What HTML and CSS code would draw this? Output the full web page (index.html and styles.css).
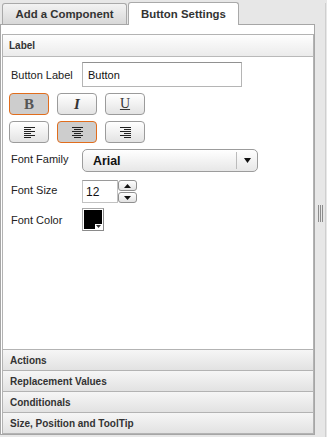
FILE: index.html
```html
<!DOCTYPE html>
<html>
<head>
<meta charset="utf-8">
<link rel="stylesheet" href="styles.css">
</head>
<body>
<div class="main">
  <div class="tabs">
    <div class="tab">Add a Component</div>
    <div class="tab active">Button Settings</div>
  </div>
  <div class="panel">
    <div class="sec-head first">Label</div>
    <div class="sec-body">
      <div class="field">
        <span class="field-label">Button Label</span>
        <input class="text-input" type="text" value="Button">
      </div>
      <div class="tool-row">
        <div class="tool on"><span class="g-b">B</span></div>
        <div class="tool"><span class="g-i">I</span></div>
        <div class="tool"><span class="g-u">U</span></div>
      </div>
      <div class="tool-row">
        <div class="tool">
          <svg width="11" height="11" viewBox="0 0 11 11"><g stroke="#222" stroke-width="1"><path d="M0 0.5H11M0 2.5H7M0 4.5H11M0 6.5H7M0 8.5H11M0 10.5H7"/></g></svg>
        </div>
        <div class="tool on">
          <svg width="11" height="11" viewBox="0 0 11 11"><g stroke="#222" stroke-width="1"><path d="M0 0.5H11M2 2.5H9M0 4.5H11M2 6.5H9M0 8.5H11M2 10.5H9"/></g></svg>
        </div>
        <div class="tool">
          <svg width="11" height="11" viewBox="0 0 11 11"><g stroke="#222" stroke-width="1"><path d="M0 0.5H11M4 2.5H11M0 4.5H11M4 6.5H11M0 8.5H11M4 10.5H11"/></g></svg>
        </div>
      </div>
      <div class="field f-family">
        <span class="field-label lbl-up">Font Family</span>
        <div class="select">
          <span class="select-text">Arial</span>
          <span class="select-arrow"><svg width="7" height="5" viewBox="0 0 7 5"><path d="M0 0H7L3.5 5Z" fill="#111"/></svg></span>
        </div>
      </div>
      <div class="field f-size">
        <span class="field-label lbl-up">Font Size</span>
        <input class="num-input" type="text" value="12">
        <div class="spin">
          <div class="spin-btn"><svg width="7" height="4" viewBox="0 0 7 4"><path d="M0 4H7L3.5 0Z" fill="#111"/></svg></div>
          <div class="spin-btn"><svg width="7" height="4" viewBox="0 0 7 4"><path d="M0 0H7L3.5 4Z" fill="#111"/></svg></div>
        </div>
      </div>
      <div class="field f-color">
        <span class="field-label">Font Color</span>
        <div class="swatch"><div class="swatch-fill"></div><div class="swatch-arrow"><svg width="5" height="3" viewBox="0 0 5 3"><path d="M0 0H5L2.5 3Z" fill="#333"/></svg></div></div>
      </div>
    </div>
    <div class="sec-head">Actions</div>
    <div class="sec-head">Replacement Values</div>
    <div class="sec-head">Conditionals</div>
    <div class="sec-head last">Size, Position and ToolTip</div>
  </div>
</div>
<div class="splitter">
  <div class="grip-col"><div class="grip"><i></i><i></i><i></i></div></div>
  <div class="edge"></div>
</div>
</body>
</html>
```
FILE: styles.css
```css
* { box-sizing: border-box; margin: 0; padding: 0; }
html, body { width: 327px; height: 437px; overflow: hidden; }
body {
  background: #e7e7e7;
  font-family: "Liberation Sans", Arial, sans-serif;
  color: #222;
  display: flex;
}
.main { width: 315px; height: 437px; display: flex; flex-direction: column; }
.tabs { height: 24px; display: flex; align-items: flex-end; gap: 1px; padding-left: 2px; }
.tab {
  width: 125px; height: 21px;
  border: 1px solid #a9a9a9; border-bottom: none;
  border-radius: 3px 3px 0 0;
  background: linear-gradient(#f3f3f3, #d8d8d8);
  font-weight: bold; font-size: 11.4px; color: #333;
  display: flex; align-items: center; justify-content: center;
}
.tab.active {
  width: 111px; height: 23px; margin-bottom: -1px;
  background: #fff; position: relative; z-index: 1;
  padding-bottom: 1px;
}
.panel {
  flex: 1; border: 1px solid #a6a6a6; background: #fff;
  margin-bottom: 2px;
  padding: 9px 0 0 1px;
  display: flex; flex-direction: column;
}
.sec-head {
  height: 21px;
  border: 1px solid #b3b3b3; border-bottom: none;
  background: linear-gradient(#f6f6f6, #e2e2e2);
  font-weight: bold; font-size: 10px; color: #333;
  padding-left: 7px;
  display: flex; align-items: center;
}
.sec-head.first {
  height: 23px; border-bottom: 1px solid #b9b9b9;
  background: linear-gradient(#fefefe, #ebebeb);
  padding-left: 6px;
}
.sec-head.last { height: 22px; border-bottom: 1px solid #b3b3b3; }
.sec-body {
  flex: 1;
  border-left: 1px solid #b3b3b3; border-right: 1px solid #b3b3b3;
  padding: 5px 6px 0;
}
.field { display: flex; align-items: center; }
.field-label { width: 73px; padding-left: 2px; font-size: 11px; color: #222; }
.lbl-up { margin-top: -3px; }
.text-input {
  width: 160px; height: 25px;
  border: 1px solid #b5b5b5; border-top-color: #919191;
  font-family: "Liberation Sans", Arial, sans-serif; font-size: 11px; color: #111;
  padding-left: 5px; outline: none;
}
.tool-row { display: flex; gap: 8px; margin-top: 6px; }
.tool {
  width: 40px; height: 22px;
  border: 1px solid #9b9b9b; border-radius: 4px;
  background: linear-gradient(#ffffff, #e3e3e3);
  display: flex; align-items: center; justify-content: center;
}
.tool.on { background: #cdcdcd; border-color: #e06d1d; }
.g-b { font-family: "Liberation Serif", serif; font-weight: bold; font-size: 15px; color: #555; }
.g-i { font-family: "Liberation Serif", serif; font-weight: bold; font-style: italic; font-size: 15px; color: #333; }
.g-u { font-family: "Liberation Serif", serif; font-size: 14px; color: #333; text-decoration: underline; }
.tool svg { display: block; }
.f-family { margin-top: 6px; }
.select {
  width: 176px; height: 23px;
  border: 1px solid #9c9c9c; border-radius: 5px;
  background: linear-gradient(#ffffff, #e7e7e7);
  display: flex; align-items: center;
}
.select-text { flex: 1; padding-left: 10px; font-weight: bold; font-size: 12.4px; color: #111; }
.select-arrow {
  width: 21px; height: 17px; border-left: 1px solid #bbb;
  display: flex; align-items: center; justify-content: center;
}
.select-arrow svg { display: block; }
.f-size { margin-top: 8px; }
.num-input {
  width: 36px; height: 23px;
  border: 1px solid #c2c2c2; border-top-color: #9a9a9a;
  font-family: "Liberation Sans", Arial, sans-serif; font-size: 12px; color: #111;
  padding-left: 3px; outline: none;
}
.spin { width: 19px; height: 23px; display: flex; flex-direction: column; gap: 1px; }
.spin-btn {
  flex: 1; border: 1px solid #8f8f8f; border-radius: 3px;
  background: linear-gradient(#ffffff, #e2e2e2);
  display: flex; align-items: center; justify-content: center;
}
.spin-btn svg { display: block; }
.f-color { margin-top: 5px; }
.swatch {
  width: 22px; height: 23px;
  border: 1px solid #a8a8a8; border-right-color: #8a8a8a; border-bottom-color: #8a8a8a;
  background: #fff; padding: 1px; position: relative;
}
.swatch-fill { width: 100%; height: 100%; background: #000; }
.swatch-arrow {
  position: absolute; right: 1px; bottom: 1px; width: 7px; height: 5px;
  background: #fff; display: flex; align-items: center; justify-content: center;
}
.swatch-arrow svg { display: block; }
.splitter { flex: 1; display: flex; }
.grip-col { width: 10px; padding: 205px 0 0 3px; }
.grip { display: flex; gap: 1px; height: 17px; }
.grip i { display: block; width: 1px; height: 17px; background: #8c8c8c; }
.edge { width: 1px; margin-top: 3px; background: #cfcfcf; }
```
